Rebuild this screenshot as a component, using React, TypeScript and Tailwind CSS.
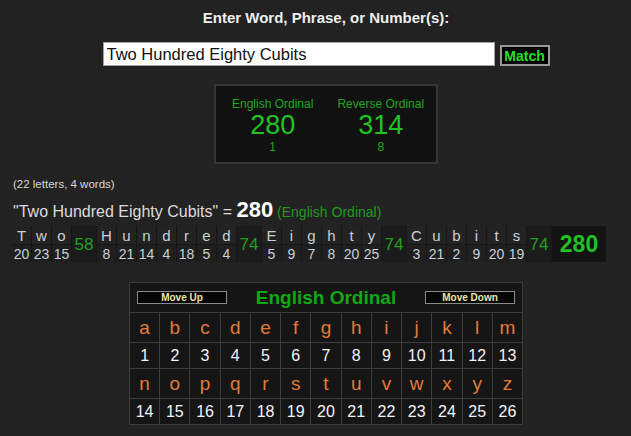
const font = "font-['Liberation_Sans',Arial,sans-serif]";

const words = [
  { letters: 'Two', values: [20, 23, 15], total: 58 },
  { letters: 'Hundred', values: [8, 21, 14, 4, 18, 5, 4], total: 74 },
  { letters: 'Eighty', values: [5, 9, 7, 8, 20, 25], total: 74 },
  { letters: 'Cubits', values: [3, 21, 2, 9, 20, 19], total: 74 },
];

const alphabet = 'abcdefghijklmnopqrstuvwxyz'.split('');

function Breakdown() {
  return (
    <div className="flex w-fit bg-[#171717] gap-px">
      {words.map((w) => (
        <div key={w.letters} className="flex gap-px">
          {w.letters.split('').map((ch, i) => (
            <div key={i} className="flex flex-col gap-px w-[19px]">
              <div className="h-[18px] bg-[#232323] flex items-center justify-center text-[15px] text-[#c9d0d8] leading-none">
                {ch}
              </div>
              <div className="h-[17px] bg-[#1f1f1f] flex items-center justify-center text-[14px] text-[#c9d0d8] leading-none">
                {w.values[i]}
              </div>
            </div>
          ))}
          <div className="w-[24px] bg-[#1b1b1b] flex items-center justify-center text-[17px] text-[#1fa01f] leading-none">
            {w.total}
          </div>
        </div>
      ))}
      <div className="w-[54px] bg-[#131313] flex items-center justify-center text-[23px] font-bold text-[#22c022] leading-none">
        280
      </div>
    </div>
  );
}

function CipherChart() {
  const rows = [alphabet.slice(0, 13), alphabet.slice(13)];
  return (
    <div className="w-[394px] border border-[#3c3c3c] bg-[#151515]">
      <div className="h-[29px] flex items-center justify-between px-[7px]">
        <button className="w-[90px] h-[13px] bg-[#050505] border border-[#8a8a8a] text-[10px] font-bold text-[#ece4a4] leading-none">
          Move Up
        </button>
        <div className="text-[19px] font-bold text-[#12a812] leading-none">English Ordinal</div>
        <button className="w-[90px] h-[13px] bg-[#050505] border border-[#8a8a8a] text-[10px] font-bold text-[#ece4a4] leading-none">
          Move Down
        </button>
      </div>
      <div className="grid grid-cols-[repeat(13,minmax(0,1fr))] gap-px bg-[#3c3c3c] pt-px">
        {rows.map((row, r) => (
          <>
            {row.map((ch) => (
              <div key={'l' + ch} className="h-[29px] bg-[#151515] flex items-center justify-center text-[19px] text-[#e27b3a] leading-none">
                {ch}
              </div>
            ))}
            {row.map((ch, i) => (
              <div key={'n' + ch} className="h-[25px] bg-[#151515] flex items-center justify-center text-[16px] text-[#f2f4f8] leading-none">
                {r * 13 + i + 1}
              </div>
            ))}
          </>
        ))}
      </div>
    </div>
  );
}

export default function App() {
  return (
    <div className={`min-h-screen bg-[#222222] ${font} pb-[14px]`}>
      <div className="pl-[21px] pt-[9px] text-center text-[15px] font-bold text-[#eeeeee] leading-[18px]">
        Enter Word, Phrase, or Number(s):
      </div>
      <div className="pl-[21px] mt-[15px] flex justify-center items-end">
        <input
          readOnly
          value="Two Hundred Eighty Cubits"
          className="w-[392px] h-[24px] bg-white border border-[#a0a0a0] px-[3px] text-[16.5px] text-[#111]"
        />
        <button className="ml-[5px] w-[50px] h-[21px] bg-black border-2 border-[#9a9a9a] text-[14px] font-bold text-[#22e022] leading-none">
          Match
        </button>
      </div>
      <div className="pl-[21px] mt-[18px] flex justify-center">
        <div className="w-[224px] h-[80px] bg-[#111111] border-2 border-[#363636] flex pl-[16px] gap-[24px] pt-[11px]">
          <div className="flex flex-col items-center text-[#1fa81f]">
            <div className="text-[12px] leading-[14px]">English Ordinal</div>
            <div className="text-[27px] leading-[29px] text-[#22c422]">280</div>
            <div className="text-[12px] leading-[14px]">1</div>
          </div>
          <div className="flex flex-col items-center text-[#1fa81f]">
            <div className="text-[12px] leading-[14px]">Reverse Ordinal</div>
            <div className="text-[27px] leading-[29px] text-[#22c422]">314</div>
            <div className="text-[12px] leading-[14px]">8</div>
          </div>
        </div>
      </div>
      <div className="pl-[13px] mt-[13px] text-[11.5px] text-[#d8d8d8] leading-[14px]">(22 letters, 4 words)</div>
      <div className="pl-[13px] mt-[8px] flex items-baseline text-[16px] text-[#dcdcdc] leading-[22px]">
        <span>"Two Hundred Eighty Cubits" =&nbsp;</span>
        <span className="text-[22px] font-bold text-white">280</span>
        <span className="text-[14px] text-[#1c9c1c]">&nbsp;(English Ordinal)</span>
      </div>
      <div className="pl-[12px] mt-[3px]">
        <Breakdown />
      </div>
      <div className="pl-[21px] mt-[20px] flex justify-center">
        <CipherChart />
      </div>
    </div>
  );
}
